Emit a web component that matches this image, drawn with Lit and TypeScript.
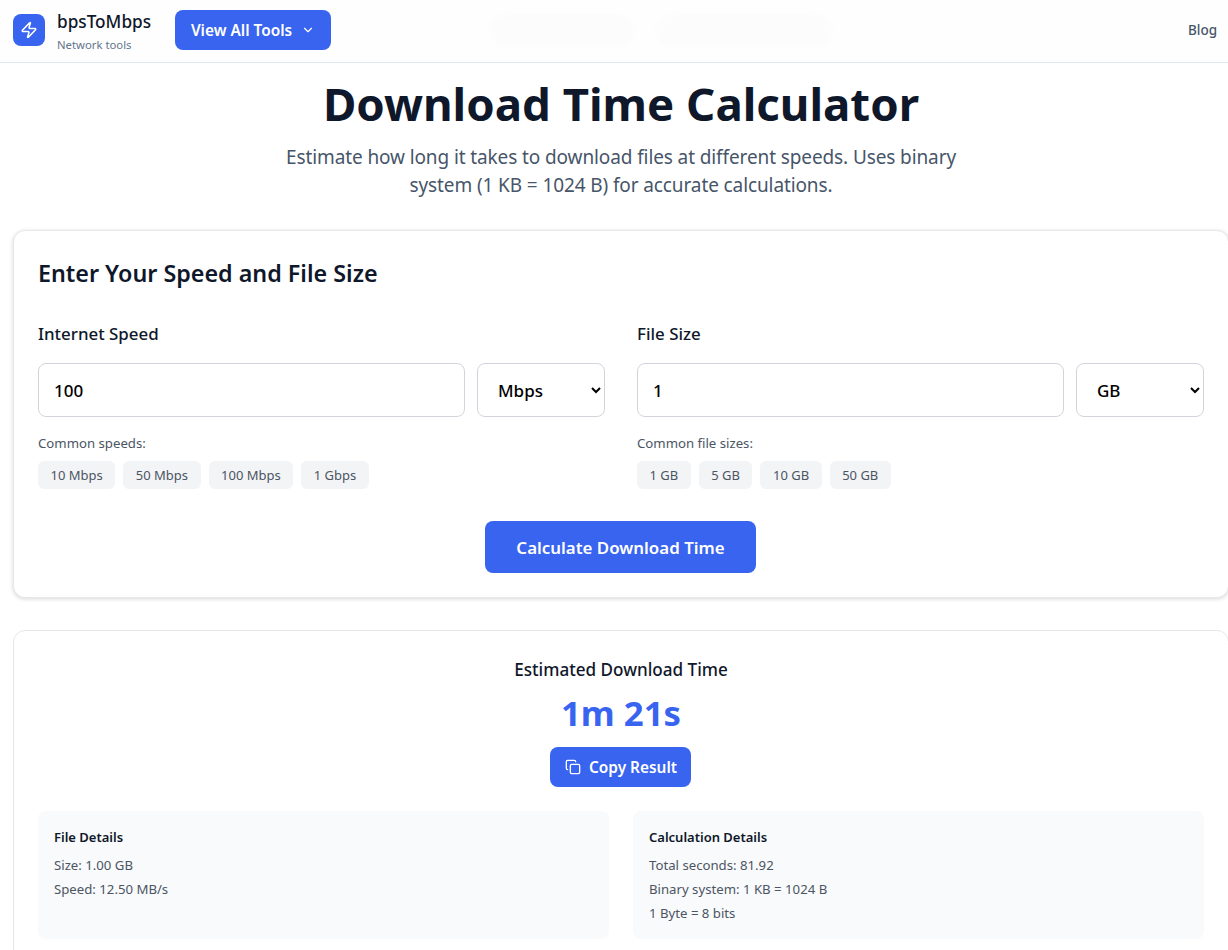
import { css, html, LitElement } from 'lit';
import { customElement, state } from 'lit/decorators.js';

const speedPresets = ['10 Mbps', '50 Mbps', '100 Mbps', '1 Gbps'];
const sizePresets = ['1 GB', '5 GB', '10 GB', '50 GB'];

@customElement('app-root')
export class AppRoot extends LitElement {
  static styles = css`
    :host {
      display: block;
      font-family: 'Noto Sans', 'Open Sans', sans-serif;
      color: #0f172a;
      background: #fff;
      height: 950px;
      overflow: hidden;
    }

    .nav {
      height: 62px;
      border-bottom: 1px solid #e2e8f0;
      background: #fefefe;
      display: flex;
      align-items: center;
      padding: 0 11px 0 13px;
    }

    .logo {
      width: 32px;
      height: 32px;
      border-radius: 8px;
      background: #3864f0;
      display: flex;
      align-items: center;
      justify-content: center;
      margin: 0 12px 2px 0;
    }

    .brand {
      width: 118px;
      padding-top: 2px;
    }

    .brand b {
      display: block;
      font-size: 17.2px;
      line-height: 26px;
      font-weight: 500;
      color: #0f172a;
    }

    .brand small {
      display: block;
      font-size: 11.3px;
      line-height: 20px;
      color: #64748b;
    }

    .tools {
      height: 40px;
      width: 156px;
      margin-bottom: 2px;
      border: 0;
      border-radius: 8px;
      background: #3864f0;
      color: #fff;
      font: 600 15.4px 'Noto Sans', sans-serif;
      display: flex;
      align-items: center;
      justify-content: center;
      gap: 9px;
      padding: 0;
    }

    .ghosts {
      display: flex;
      gap: 22px;
      margin-left: 160px;
      margin-bottom: 2px;
    }

    .ghost {
      height: 33px;
      border-radius: 16px;
      background: #fcfcfd;
      filter: blur(1px);
    }

    .blog {
      margin: 0 0 2px auto;
      font-size: 13.5px;
      font-weight: 500;
      color: #475569;
    }

    main {
      width: 1216px;
      margin-left: 13px;
    }

    h1 {
      margin: 10px 0 0;
      text-align: center;
      font-size: 45.6px;
      line-height: 60px;
      font-weight: 700;
      color: #0f172a;
    }

    .lead {
      width: 700px;
      margin: 10px auto 31px;
      text-align: center;
      font-size: 19px;
      letter-spacing: -0.11px;
      line-height: 28px;
      color: #475569;
    }

    .card {
      box-sizing: border-box;
      background: #fff;
      border: 1px solid #e5e7eb;
      border-radius: 12px;
      padding: 24px;
    }

    .card.input {
      height: 368px;
      box-shadow: 0 1px 4px rgba(0, 0, 0, 0.16);
      margin-bottom: 32px;
    }

    h2 {
      margin: 0 0 29px;
      font-size: 23.3px;
      line-height: 36px;
      font-weight: 600;
      color: #0f172a;
    }

    .grid {
      display: grid;
      grid-template-columns: 1fr 1fr;
      gap: 32px;
    }

    label {
      display: block;
      font-size: 16.9px;
      line-height: 28px;
      font-weight: 500;
      margin-bottom: 15px;
    }

    .fields {
      display: flex;
      gap: 12px;
    }

    input,
    select {
      box-sizing: border-box;
      height: 54px;
      border: 1px solid #d1d5db;
      border-radius: 8px;
      background: #fff;
      color: #000;
      font: 500 17px 'Noto Sans', sans-serif;
    }

    input {
      flex: 1;
      min-width: 0;
      padding: 0 16px 0 15px;
    }

    select {
      width: 128px;
      padding: 0 16px;
    }

    .hint {
      margin-top: 18px;
      font-size: 13.2px;
      line-height: 16px;
      color: #4b5563;
    }

    .chips {
      display: flex;
      gap: 8px;
      margin-top: 10px;
    }

    .chip {
      height: 28px;
      padding: 0 12.5px;
      border-radius: 6px;
      background: #f3f4f6;
      color: #4b5563;
      font-size: 13px;
      display: flex;
      align-items: center;
    }

    .submit {
      display: block;
      width: 271px;
      height: 52px;
      margin: 32px 0 0 447px;
      border: 0;
      border-radius: 8px;
      background: #3864f0;
      color: #fff;
      font: 600 16.9px 'Noto Sans', sans-serif;
    }

    .result {
      text-align: center;
      height: 340px;
      padding-top: 26px;
    }

    .result h3 {
      margin: 0;
      font-size: 17.1px;
      line-height: 26px;
      font-weight: 500;
    }

    .time {
      margin-top: 10px;
      font-size: 34.8px;
      line-height: 40px;
      font-weight: 700;
      color: #3864f0;
    }

    .copy {
      height: 40px;
      width: 141px;
      margin: 14px 2px 0 0;
      border: 0;
      border-radius: 8px;
      background: #3864f0;
      color: #fff;
      font: 600 15.4px 'Noto Sans', sans-serif;
      display: inline-flex;
      align-items: center;
      justify-content: center;
      gap: 8px;
      padding: 0 0 0 2px;
    }

    .panels {
      display: grid;
      grid-template-columns: 1fr 1fr;
      gap: 24px;
      margin-top: 24px;
      text-align: left;
    }

    .panel {
      height: 128px;
      box-sizing: border-box;
      padding: 16px;
      border-radius: 8px;
      background: #f9fafb;
      font-size: 13.2px;
      line-height: 24px;
      color: #4b5563;
    }

    .panel h4 {
      margin: 0 0 6px;
      font-size: 13px;
      line-height: 20px;
      font-weight: 600;
      color: #0f172a;
    }
  `;

  @state()
  speed = '100';

  @state()
  size = '1';

  render() {
    return html`
      <header class="nav">
        <div class="logo">
          <svg width="18" height="18" viewBox="0 0 24 24" fill="none" stroke="#fff" stroke-width="2" stroke-linecap="round" stroke-linejoin="round">
            <path d="M4 14a1 1 0 0 1-.78-1.63l9.9-10.2a.5.5 0 0 1 .86.46l-1.92 6.02A1 1 0 0 0 13 10h7a1 1 0 0 1 .78 1.63l-9.9 10.2a.5.5 0 0 1-.86-.46l1.92-6.02A1 1 0 0 0 11 14z" />
          </svg>
        </div>
        <div class="brand"><b>bpsToMbps</b><small>Network tools</small></div>
        <button class="tools">
          View All Tools
          <svg width="14" height="14" viewBox="0 0 24 24" fill="none" stroke="#fff" stroke-width="2" stroke-linecap="round" stroke-linejoin="round"><path d="m6 9 6 6 6-6" /></svg>
        </button>
        <div class="ghosts">
          <div class="ghost" style="width: 143px"></div>
          <div class="ghost" style="width: 176px"></div>
        </div>
        <span class="blog">Blog</span>
      </header>
      <main>
        <h1>Download Time Calculator</h1>
        <p class="lead">Estimate how long it takes to download files at different speeds. Uses binary system (1 KB = 1024 B) for accurate calculations.</p>

        <section class="card input">
          <h2>Enter Your Speed and File Size</h2>
          <div class="grid">
            <div>
              <label>Internet Speed</label>
              <div class="fields">
                <input .value=${this.speed} />
                <select><option>Mbps</option><option>Kbps</option><option>Gbps</option></select>
              </div>
              <div class="hint">Common speeds:</div>
              <div class="chips">${speedPresets.map((p) => html`<span class="chip">${p}</span>`)}</div>
            </div>
            <div>
              <label>File Size</label>
              <div class="fields">
                <input .value=${this.size} />
                <select><option>GB</option><option>MB</option><option>TB</option></select>
              </div>
              <div class="hint">Common file sizes:</div>
              <div class="chips">${sizePresets.map((p) => html`<span class="chip">${p}</span>`)}</div>
            </div>
          </div>
          <button class="submit">Calculate Download Time</button>
        </section>

        <section class="card result">
          <h3>Estimated Download Time</h3>
          <div class="time">1m 21s</div>
          <button class="copy">
            <svg width="16" height="16" viewBox="0 0 24 24" fill="none" stroke="#fff" stroke-width="2" stroke-linecap="round" stroke-linejoin="round">
              <rect x="8" y="8" width="14" height="14" rx="2" ry="2" />
              <path d="M4 16c-1.1 0-2-.9-2-2V4c0-1.1.9-2 2-2h10c1.1 0 2 .9 2 2" />
            </svg>
            Copy Result
          </button>
          <div class="panels">
            <div class="panel">
              <h4>File Details</h4>
              <div>Size: 1.00 GB</div>
              <div>Speed: 12.50 MB/s</div>
            </div>
            <div class="panel">
              <h4>Calculation Details</h4>
              <div>Total seconds: 81.92</div>
              <div>Binary system: 1 KB = 1024 B</div>
              <div>1 Byte = 8 bits</div>
            </div>
          </div>
        </section>
      </main>
    `;
  }
}
